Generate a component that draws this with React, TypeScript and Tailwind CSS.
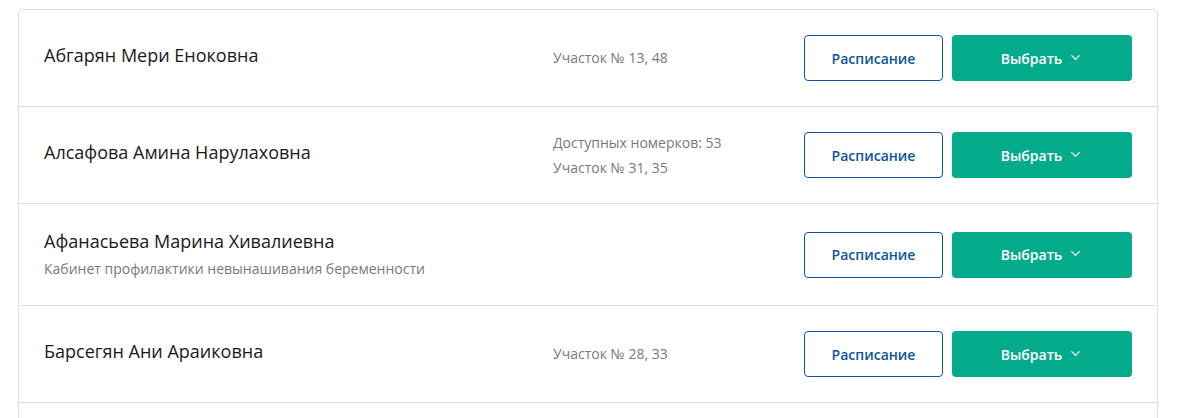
import React from 'react';
import { ChevronDown } from 'lucide-react';

interface Doctor {
  name: string;
  subtitle?: string;
  meta: string[];
}

const doctors: Doctor[] = [
  { name: 'Абгарян Мери Еноковна', meta: ['Участок № 13, 48'] },
  { name: 'Алсафова Амина Нарулаховна', meta: ['Доступных номерков: 53', 'Участок № 31, 35'] },
  {
    name: 'Афанасьева Марина Хивалиевна',
    subtitle: 'Кабинет профилактики невынашивания беременности',
    meta: []
  },
  { name: 'Барсегян Ани Араиковна', meta: ['Участок № 28, 33'] }
];

const DoctorRow: React.FC<{ doctor: Doctor }> = ({ doctor }) => (
  <div className="flex items-center px-[25px] py-[25px] border-b border-[#dedede]">
    <div className={`flex-1 min-w-0 ${doctor.subtitle ? '' : 'pb-[6px]'}`}>
      <div className="text-[18px] leading-[24px] text-[#1a1a1a]">{doctor.name}</div>
      {doctor.subtitle && (
        <div className="mt-[5px] text-[14px] leading-[22px] text-[#757a80]">{doctor.subtitle}</div>
      )}
    </div>
    <div className="w-[251px] flex flex-col gap-[5px] text-[14px] leading-[20px] text-[#757a80]">
      {doctor.meta.map((m) => (
        <div key={m}>{m}</div>
      ))}
    </div>
    <div className="flex gap-[9px]">
      <button className="w-[139px] h-[46px] rounded-[4px] border border-[#0d559c] bg-white text-[14px] font-semibold text-[#0d559c]">
        Расписание
      </button>
      <button className="w-[180px] h-[46px] rounded-[4px] bg-[#03ab8b] text-[14px] font-semibold text-white flex items-center justify-center gap-[6px]">
        Выбрать
        <ChevronDown size={15} strokeWidth={2} className="mt-[-2px]" />
      </button>
    </div>
  </div>
);

export default function App() {
  return (
    <div className="w-[1184px] h-[418px] overflow-hidden bg-white pt-[9px] pl-[18px]" style={{ fontFamily: '"Open Sans", sans-serif' }}>
      <div className="w-[1140px] rounded-[5px] border border-[#dedede] bg-white">
        {doctors.map((d) => (
          <DoctorRow key={d.name} doctor={d} />
        ))}
        <div className="h-[96px]" />
      </div>
    </div>
  );
}
